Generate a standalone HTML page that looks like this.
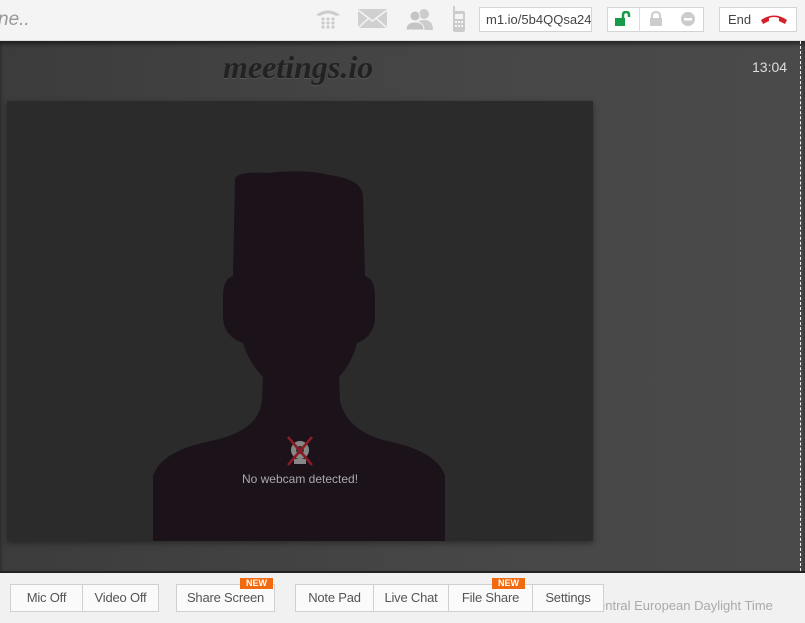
<!DOCTYPE html>
<html><head><style>
*{margin:0;padding:0;box-sizing:border-box}
body{width:805px;height:623px;overflow:hidden;font-family:"Liberation Sans",sans-serif;background:#3e3e3e;position:relative}
.top{position:absolute;left:0;top:0;width:805px;height:41px;background:#f4f4f4;border-bottom:1px solid #ddd}
.main{position:absolute;left:0;top:41px;width:805px;height:530px;background:linear-gradient(90deg,#3c3c3c,#474747 60%,#4a4a4a);box-shadow:inset 0 3px 4px rgba(0,0,0,.5)}
.bot{position:absolute;left:0;top:571px;width:805px;height:52px;background:#f1f1f1;border-top:2px solid #222}
.box{position:absolute;background:#fff;border:1px solid #d4d4d4}
.btn{position:absolute;top:584px;height:28px;background:#fafafa;border:1px solid #d0d0d0;font-size:13px;color:#555;line-height:26px;text-align:center;letter-spacing:-0.2px}
.new{position:absolute;top:578px;height:11px;background:#f26a0f;color:#fff;font-size:9px;font-weight:bold;line-height:11px;text-align:center;width:33px}
</style></head><body>
<div class="top">
 <div style="position:absolute;left:-2px;top:9px;font-size:19px;color:#999;font-style:italic">ne..</div>
 <svg style="position:absolute;left:314px;top:7px" width="28" height="24" viewBox="0 0 28 24"><path d="M2 8 Q14 -1 26 8 L22 9 Q14 4 6 9Z" fill="#ccc"/><g fill="#ccc"><circle cx="9" cy="12" r="1.6"/><circle cx="14" cy="12" r="1.6"/><circle cx="19" cy="12" r="1.6"/><circle cx="9" cy="16" r="1.6"/><circle cx="14" cy="16" r="1.6"/><circle cx="19" cy="16" r="1.6"/><circle cx="9" cy="20" r="1.6"/><circle cx="14" cy="20" r="1.6"/><circle cx="19" cy="20" r="1.6"/></g></svg>
 <svg style="position:absolute;left:358px;top:9px" width="29" height="19"><rect width="29" height="19" fill="#d0d0d0"/><path d="M0 1 L14.5 12 L29 1 M0 19 L11 9 M29 19 L18 9" stroke="#f4f4f4" stroke-width="1.5" fill="none"/></svg>
 <svg style="position:absolute;left:405px;top:8px" width="30" height="22"><circle cx="19" cy="6" r="5" fill="#ccc"/><path d="M10 22 Q10 12 19 12 Q28 12 28 22Z" fill="#ccc"/><circle cx="10" cy="8" r="5" fill="#c4c4c4" stroke="#f4f4f4"/><path d="M1 22 Q1 14 10 14 Q19 14 19 22Z" fill="#c4c4c4" stroke="#f4f4f4"/></svg>
 <svg style="position:absolute;left:452px;top:6px" width="14" height="26"><rect x="1" y="0" width="2" height="6" fill="#ccc"/><rect x="1" y="5" width="12" height="21" rx="2" fill="#ccc"/><rect x="3" y="8" width="8" height="5" fill="#f4f4f4"/><g fill="#f4f4f4"><rect x="3" y="15" width="2" height="2"/><rect x="6" y="15" width="2" height="2"/><rect x="9" y="15" width="2" height="2"/><rect x="3" y="19" width="2" height="2"/><rect x="6" y="19" width="2" height="2"/><rect x="9" y="19" width="2" height="2"/></g></svg>
 <div class="box" style="left:479px;top:7px;width:113px;height:25px;font-size:13px;color:#444;line-height:23px;padding-left:6px;overflow:hidden;white-space:nowrap">m1.io/5b4QQsa24</div>
 <div class="box" style="left:607px;top:7px;width:97px;height:25px"></div>
 <div style="position:absolute;left:639px;top:7px;width:1px;height:25px;background:#ddd"></div>
 <svg style="position:absolute;left:614px;top:11px" width="20" height="16"><path d="M9 7 V4 Q9 1 12 1 Q15 1 15 4 V6" stroke="#1a9b4b" stroke-width="2.5" fill="none"/><rect x="1" y="7" width="10" height="8" fill="#1a9b4b"/></svg>
 <svg style="position:absolute;left:649px;top:11px" width="14" height="16"><path d="M3 7 V5 Q3 1 7 1 Q11 1 11 5 V7" stroke="#ccc" stroke-width="2" fill="none"/><rect x="1" y="7" width="12" height="8" fill="#ccc"/></svg>
 <svg style="position:absolute;left:681px;top:12px" width="14" height="14"><circle cx="7" cy="7" r="7" fill="#ccc"/><rect x="3" y="6" width="8" height="2.5" fill="#fff"/></svg>
 <div class="box" style="left:719px;top:7px;width:78px;height:25px;font-size:13px;color:#444;line-height:23px;padding-left:8px">End</div>
 <svg style="position:absolute;left:760px;top:13px" width="28" height="12"><path d="M1 7 Q14 -2 27 7 L25 11 L19 8 V5 Q14 3 9 5 V8 L3 11Z" fill="#d4212a"/></svg>
</div>
<div class="main">
 <div style="position:absolute;left:223px;top:8px;font-family:'Liberation Serif',serif;font-style:italic;font-weight:bold;font-size:32px;color:#222;text-shadow:0 1px 0 #555;letter-spacing:0px">meetings.io</div>
 <div style="position:absolute;left:752px;top:18px;font-size:14px;color:#ddd">13:04</div>
 <div style="position:absolute;left:7px;top:60px;width:586px;height:440px;background:#2b2b2b;box-shadow:0 2px 6px rgba(0,0,0,.4);overflow:hidden">
  <svg width="586" height="440" style="position:absolute;left:0;top:0"><path d="M228 78 Q230 70 260 72 Q300 68 322 74 Q355 78 356 95 L358 175 Q368 178 368 195 L368 218 Q366 236 350 242 Q345 262 332 276 L333 300 Q340 330 380 340 Q430 350 438 375 L438 440 L146 440 L146 375 Q154 350 204 340 Q252 330 255 300 L256 276 Q242 262 236 242 Q218 236 216 218 L216 195 Q216 178 226 175Z" fill="#1b121a"/></svg>
  <svg style="position:absolute;left:278px;top:334px" width="30" height="32"><circle cx="15" cy="15" r="9" fill="#888"/><circle cx="15" cy="15" r="4" fill="#333"/><rect x="9" y="24" width="12" height="5" fill="#888"/><path d="M3 2 L27 30 M27 2 L3 30" stroke="#8a1c24" stroke-width="2.5"/></svg>
  <div style="position:absolute;left:0;width:586px;top:371px;text-align:center;font-size:12px;color:#aaa">No webcam detected!</div>
 </div>
 <div style="position:absolute;left:800px;top:0;width:0;height:530px;border-left:1px dashed #eee"></div>
</div>
<div class="bot"></div>
<div style="position:absolute;left:598px;top:598px;font-size:13px;color:#aaa">entral European Daylight Time</div>
<div class="btn" style="left:10px;width:73px">Mic Off</div>
<div class="btn" style="left:82px;width:77px">Video Off</div>
<div class="btn" style="left:176px;width:99px">Share Screen</div>
<div class="btn" style="left:295px;width:79px">Note Pad</div>
<div class="btn" style="left:373px;width:76px">Live Chat</div>
<div class="btn" style="left:448px;width:85px">File Share</div>
<div class="btn" style="left:532px;width:72px">Settings</div>
<div class="new" style="left:240px">NEW</div>
<div class="new" style="left:492px">NEW</div>
</body></html>
